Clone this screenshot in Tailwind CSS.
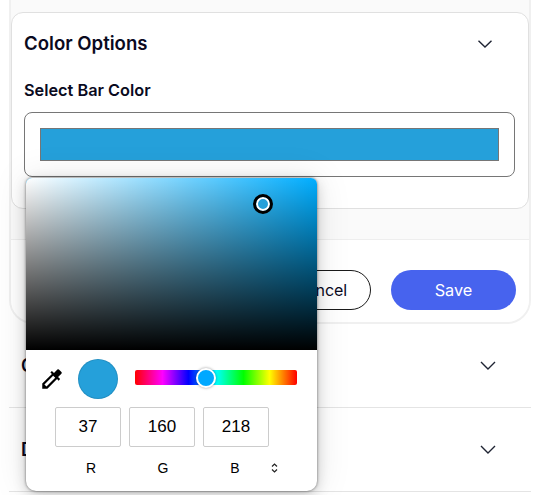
<!DOCTYPE html>
<html>
<head>
<meta charset="utf-8">
<script src="https://cdn.jsdelivr.net/npm/@tailwindcss/browser@4"></script>
</head>
<body class="bg-white">
<div class="relative w-[534px] h-[495px] overflow-hidden bg-white font-['Inter',sans-serif] text-[#0a0a1e]">
  <div class="relative ml-[9px] w-[522px] h-[324px] bg-[#fafafa] border-x-2 border-b-2 border-[#f0f0f0] rounded-b-[24px] flex flex-col">
    <div class="mt-[12px] w-[518px] h-[197px] bg-white border border-[#e0e0e0] rounded-[12px] pl-[12px] shrink-0">
      <div class="flex items-center justify-between h-[62px]">
        <span class="text-[18.6px] leading-[28px] font-semibold -mt-[2px]">Color Options</span>
        <svg class="mr-[36px] -mt-[1px]" width="14" height="8" viewBox="0 0 14 8" fill="none" stroke="#1f2433" stroke-width="1.4"><path d="M0.5 0.7 L7 7 L13.5 0.7"/></svg>
      </div>
      <div class="text-[16.3px] leading-[24px] font-semibold mt-[3px]">Select Bar Color</div>
      <div class="mt-[10px] w-[491px] h-[65px] border border-[#767676] rounded-[8px] p-[15px]">
        <div class="w-full h-full bg-[#25a0da] border border-[#767676]"></div>
      </div>
    </div>
    <div class="h-[30px] shrink-0"></div>
    <div class="border-t border-[#eeeeee] bg-white flex-1 rounded-b-[22px] flex justify-end items-start pt-[30px] pr-[13px] gap-[20px]">
      <button class="w-[100px] h-[40px] rounded-full border border-[#1a1a1a] text-[16px] text-center bg-white">Cancel</button>
      <button class="w-[125px] h-[40px] rounded-full bg-[#4763ee] text-white text-[16.3px]">Save</button>
    </div>
  </div>
  <div class="ml-[9px] w-[522px]">
    <div class="h-[84px] flex items-center justify-between border-b border-[#e4e4e4] pl-[12px] pr-[35px]">
      <span class="text-[18px] font-semibold">Chart Options</span>
      <svg width="16" height="9" viewBox="0 0 16 9" fill="none" stroke="#1f2433" stroke-width="1.4"><path d="M1 1 L8 8 L15 1"/></svg>
    </div>
    <div class="h-[84px] flex items-center justify-between border-b border-[#e4e4e4] pl-[12px] pr-[35px]">
      <span class="text-[18px] font-semibold">Data Options</span>
      <svg width="16" height="9" viewBox="0 0 16 9" fill="none" stroke="#1f2433" stroke-width="1.4"><path d="M1 1 L8 8 L15 1"/></svg>
    </div>
  </div>

  <div class="absolute left-[26px] top-[178px] w-[291px] h-[313px] bg-white rounded-t-[6px] rounded-b-[10px] overflow-hidden shadow-[0_0_3px_rgba(0,0,0,0.55),0_4px_14px_rgba(0,0,0,0.18),0_0_36px_rgba(0,0,0,0.10)] font-['Liberation_Sans',sans-serif] text-black">
    <div class="relative h-[172px] bg-[hsl(199,100%,50%)]">
      <div class="absolute inset-0 bg-gradient-to-r from-white to-white/0"></div>
      <div class="absolute inset-0 bg-gradient-to-t from-black to-black/0"></div>
      <div class="absolute left-[227px] top-[16px] w-[20px] h-[20px] rounded-full bg-[#25a0da] border-[3px] border-black ring-2 ring-white ring-inset"></div>
    </div>
    <div class="flex items-center pl-[13px] pt-[9px]">
      <svg class="w-[26px] h-[26px]" viewBox="0 0 24 24" fill="#000"><path d="M20.71 5.63l-2.34-2.34a1 1 0 0 0-1.41 0l-3.12 3.12-1.93-1.91-1.41 1.41 1.42 1.42L3 16.25V21h4.75l8.92-8.92 1.42 1.42 1.41-1.41-1.92-1.92 3.12-3.12a1 1 0 0 0 .01-1.42zM6.92 19L5 17.08l8.06-8.06 1.92 1.92L6.92 19z"/></svg>
      <div class="ml-[13px] w-[40px] h-[40px] rounded-full bg-[#25a0da] border border-black/10 shrink-0"></div>
      <div class="relative ml-[17px] w-[162px] h-[15px] -mt-[4px] rounded-[2px] bg-[linear-gradient(to_right,#ff0000,#ff00ff_17%,#0000ff_33%,#00ffff_50%,#00ff00_67%,#ffff00_83%,#ff0000)]">
        <div class="absolute left-[61px] top-[-2px] w-[20px] h-[20px] rounded-full bg-[#00a8ff] border-[2px] border-white shadow-[0_0_3px_rgba(0,0,0,0.4)]"></div>
      </div>
    </div>
    <div class="flex gap-[8px] pl-[29px] mt-[8px]">
      <div class="w-[66px] h-[40px] border border-[#cccccc] rounded-[2px] flex items-center justify-center text-[17px]">37</div>
      <div class="w-[66px] h-[40px] border border-[#cccccc] rounded-[2px] flex items-center justify-center text-[17px]">160</div>
      <div class="w-[66px] h-[40px] border border-[#cccccc] rounded-[2px] flex items-center justify-center text-[17px]">218</div>
    </div>
    <div class="flex gap-[6px] pl-[32px] mt-[12px] text-[14px] leading-[18px] items-center">
      <div class="w-[66px] text-center">R</div>
      <div class="w-[66px] text-center">G</div>
      <div class="w-[66px] text-center">B</div>
      <svg class="ml-[-3px]" width="7" height="10" viewBox="0 0 7 10" fill="none" stroke="#222" stroke-width="1.2"><path d="M1 3.5 L3.5 1 L6 3.5 M1 6.5 L3.5 9 L6 6.5"/></svg>
    </div>
  </div>
</div>
</body>
</html>
